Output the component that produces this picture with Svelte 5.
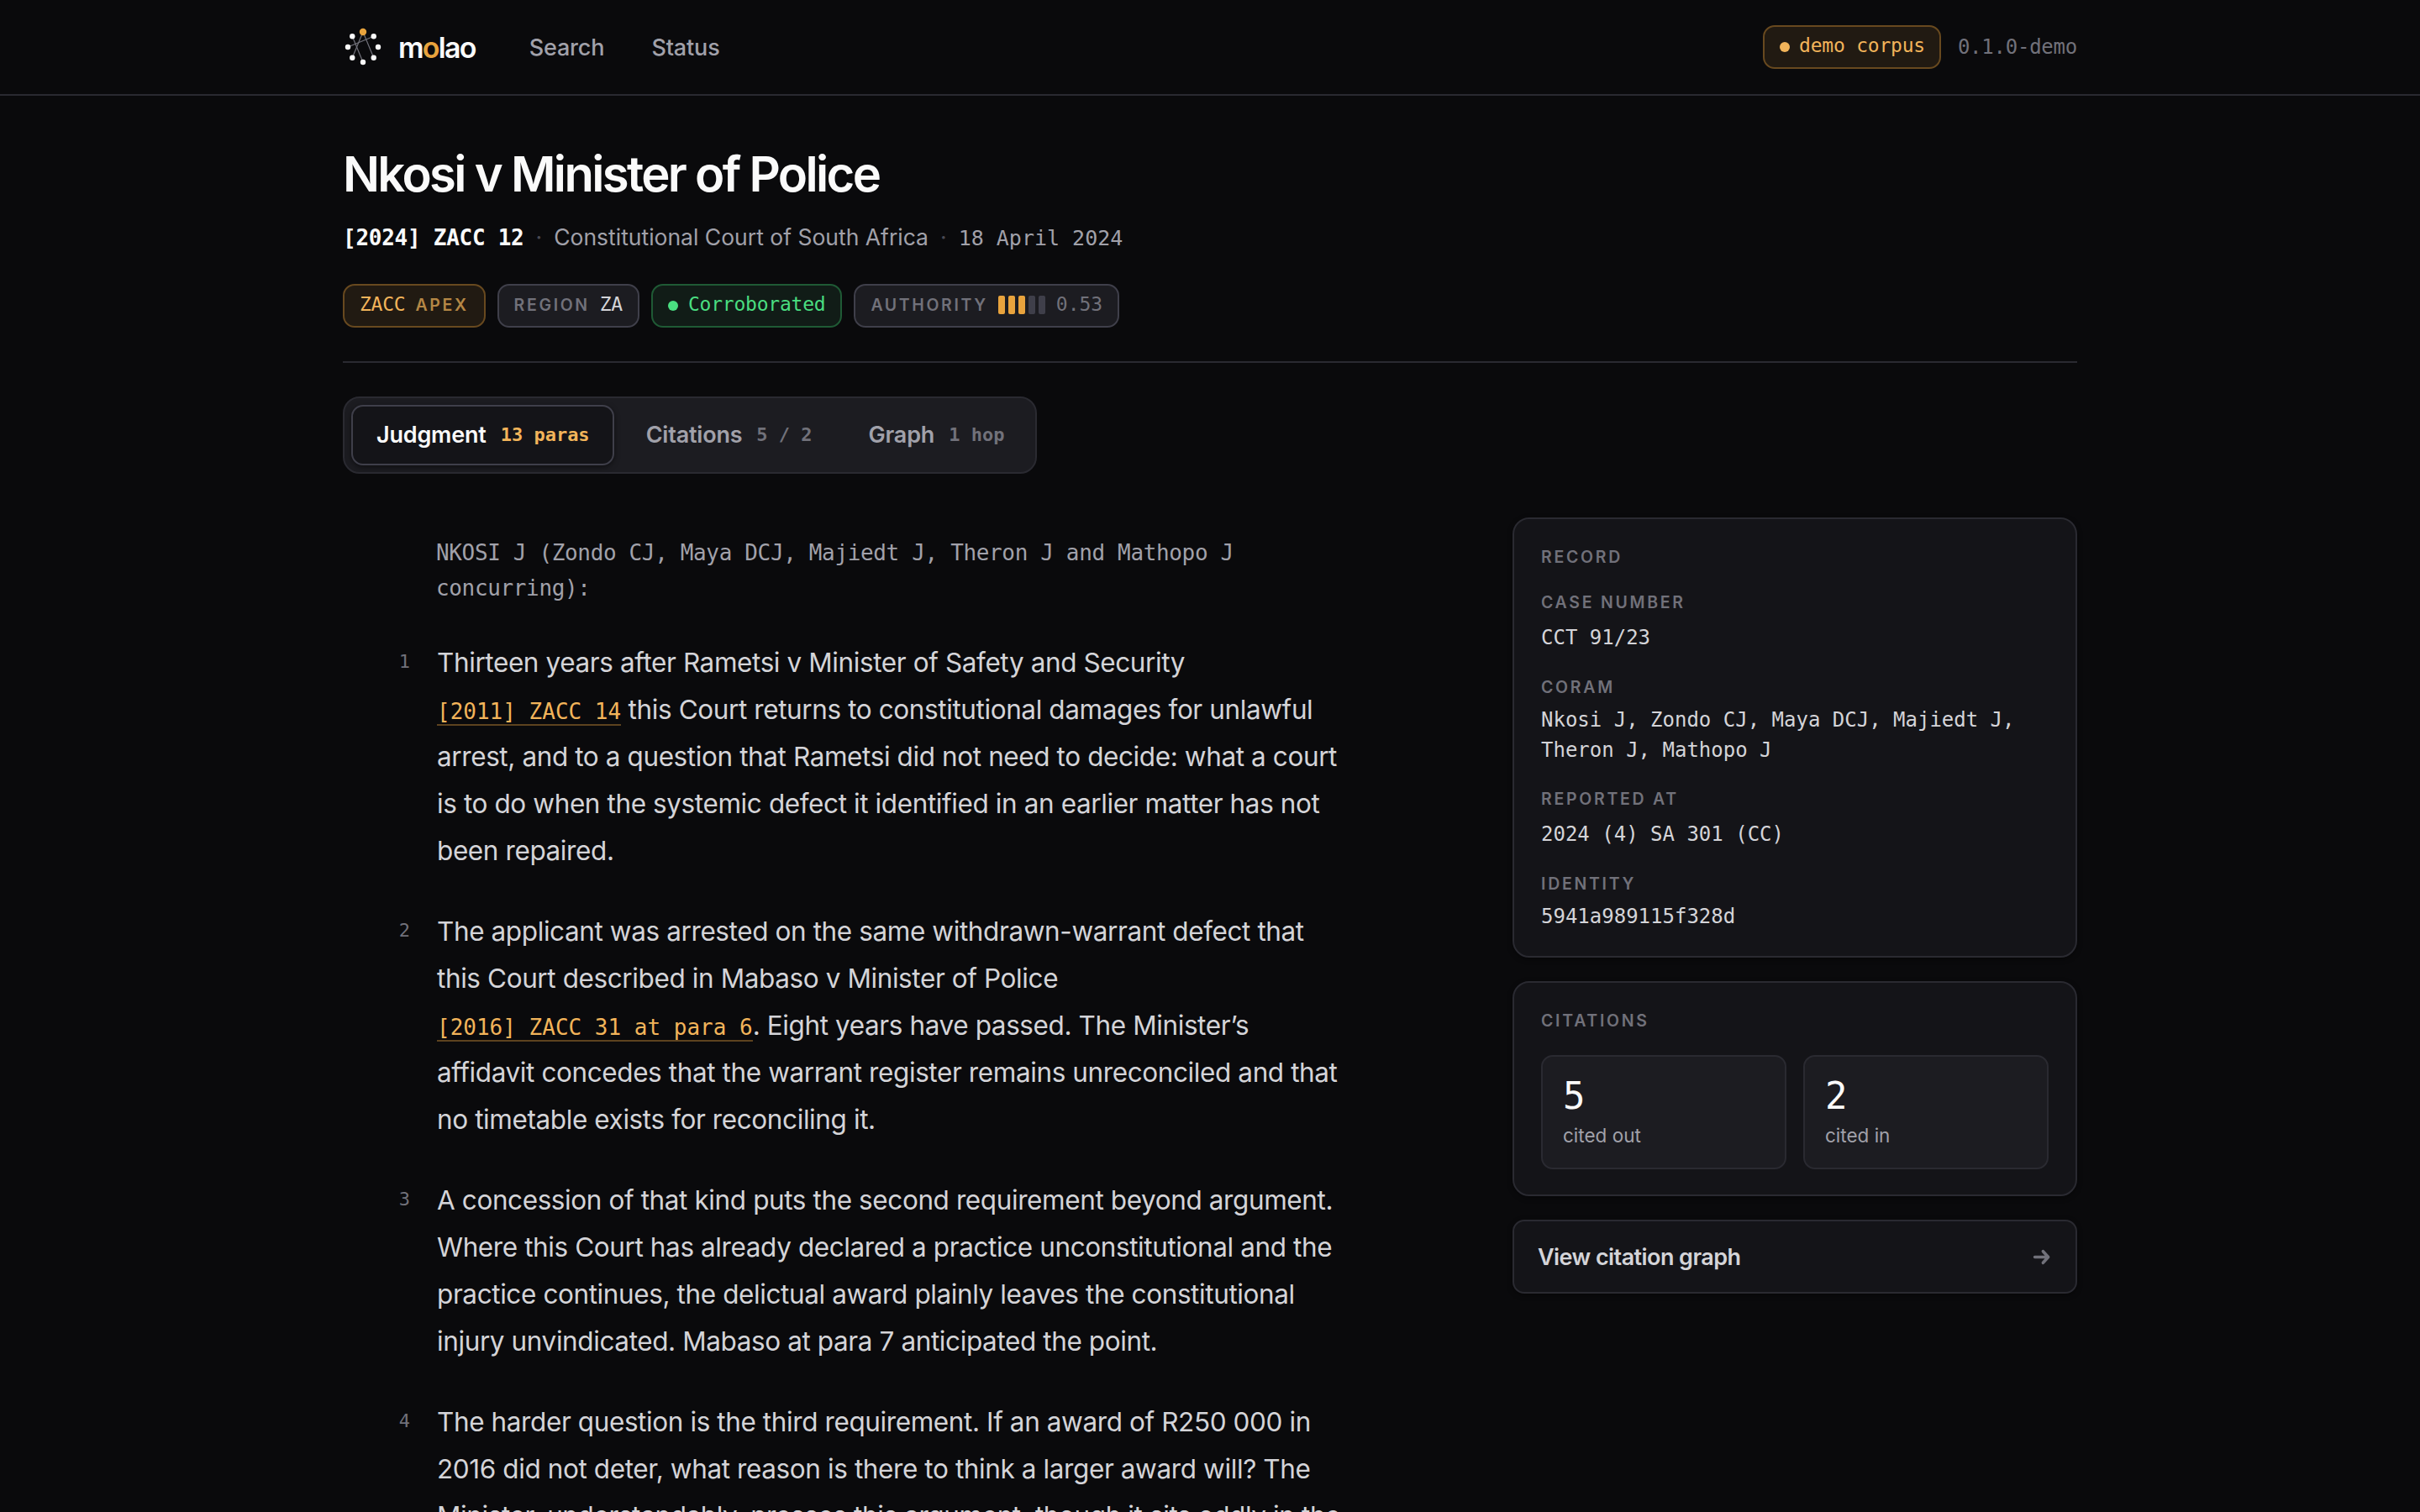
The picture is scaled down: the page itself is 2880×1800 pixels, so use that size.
<script>
	const nodes = [0, 1, 2, 3, 4, 5, 6, 7].map((i) => {
		const angle = (i * Math.PI) / 4 - Math.PI / 2;
		return { x: 12 + 9 * Math.cos(angle), y: 12 + 9 * Math.sin(angle) };
	});

	// pairs of node indexes joined by a line
	const links = [
		[0, 3],
		[0, 5],
		[1, 6],
		[7, 4],
	];

	const authority = 0.53;
	const record = [
		{ label: "Case number", value: "CCT 91/23" },
		{ label: "Coram", value: "Nkosi J, Zondo CJ, Maya DCJ, Majiedt J, Theron J, Mathopo J", long: true },
		{ label: "Reported at", value: "2024 (4) SA 301 (CC)" },
		{ label: "Identity", value: "5941a989115f328d", long: true },
	];

	const paragraphs = [
		[
			"Thirteen years after Rametsi v Minister of Safety and Security ",
			{ cite: "[2011] ZACC 14" },
			" this Court returns to constitutional damages for unlawful arrest, and to a question that Rametsi did not need to decide: what a court is to do when the systemic defect it identified in an earlier matter has not been repaired.",
		],
		[
			"The applicant was arrested on the same withdrawn-warrant defect that this Court described in Mabaso v Minister of Police ",
			{ cite: "[2016] ZACC 31 at para 6" },
			". Eight years have passed. The Minister’s affidavit concedes that the warrant register remains unreconciled and that no timetable exists for reconciling it.",
		],
		[
			"A concession of that kind puts the second requirement beyond argument. Where this Court has already declared a practice unconstitutional and the practice continues, the delictual award plainly leaves the constitutional injury unvindicated. Mabaso at para 7 anticipated the point.",
		],
		[
			"The harder question is the third requirement. If an award of R250 000 in 2016 did not deter, what reason is there to think a larger award will? The Minister, understandably, presses this argument, though it sits oddly in the",
		],
	];

	let tab = "judgment";
	const tabs = [
		{ id: "judgment", name: "Judgment", count: "13 paras" },
		{ id: "citations", name: "Citations", count: "5 / 2" },
		{ id: "graph", name: "Graph", count: "1 hop" },
	];
</script>

<div class="page">
	<header>
		<div class="wrap bar">
			<a class="brand" href="#/">
				<svg viewBox="0 0 24 24" width="48" height="48">
					{#each links as [a, b]}
						<line x1={nodes[a].x} y1={nodes[a].y} x2={nodes[b].x} y2={nodes[b].y} />
					{/each}
					{#each nodes as node, i}
						<circle cx={node.x} cy={node.y} r={i === 0 ? 2.1 : 1.6} class:lead={i === 0} />
					{/each}
				</svg>
				<span class="word">m<b>o</b>lao</span>
			</a>
			<nav>
				<a href="#/search">Search</a>
				<a href="#/status">Status</a>
			</nav>
			<div class="meta">
				<span class="chip amber"><i class="dot"></i>demo corpus</span>
				<span class="version">0.1.0-demo</span>
			</div>
		</div>
	</header>

	<main class="wrap">
		<section class="title">
			<h1>Nkosi v Minister of Police</h1>
			<p class="sub">
				<strong>[2024] ZACC 12</strong>
				<span class="sep">·</span>
				<span>Constitutional Court of South Africa</span>
				<span class="sep">·</span>
				<span class="mono">18 April 2024</span>
			</p>
			<div class="chips">
				<span class="chip amber">ZACC <em>Apex</em></span>
				<span class="chip"><em>Region</em> ZA</span>
				<span class="chip green"><i class="dot"></i>Corroborated</span>
				<span class="chip">
					<em>Authority</em>
					<span class="meter">
						{#each [0, 1, 2, 3, 4] as n}
							<i class:on={n < Math.round(authority * 5)}></i>
						{/each}
					</span>
					<span class="score">{authority}</span>
				</span>
			</div>
		</section>

		<div class="tabs">
			{#each tabs as t}
				<button class:active={tab === t.id} on:click={() => (tab = t.id)}>
					{t.name}<span>{t.count}</span>
				</button>
			{/each}
		</div>

		<div class="columns">
			<article>
				<p class="bench">NKOSI J (Zondo CJ, Maya DCJ, Majiedt J, Theron J and Mathopo J concurring):</p>
				{#each paragraphs as parts, i}
					<div class="para">
						<span class="num">{i + 1}</span>
						<p>
							{#each parts as part}{#if part.cite}<a href="#/cite">{part.cite}</a>{:else}{part}{/if}{/each}
						</p>
					</div>
				{/each}
			</article>

			<aside>
				<div class="card record">
					<h2>Record</h2>
					<dl>
						{#each record as row}
							<dt>{row.label}</dt>
							<dd class:long={row.long}>{row.value}</dd>
						{/each}
					</dl>
				</div>
				<div class="card">
					<h2>Citations</h2>
					<div class="stats">
						<div class="stat"><b>5</b><span>cited out</span></div>
						<div class="stat"><b>2</b><span>cited in</span></div>
					</div>
				</div>
				<a class="graph-link" href="#/graph">
					View citation graph
					<svg viewBox="0 0 24 24" width="24" height="24">
						<path d="M3.6 12.5h15.8M13.4 5.7l6.2 6.8-6.2 6.8" />
					</svg>
				</a>
			</aside>
		</div>
	</main>
</div>

<style>
	:global(body) {
		background: #0a0a0c;
	}

	.page {
		height: 1800px;
		overflow: hidden;
		font-family: Inter, "Liberation Sans", sans-serif;
		font-size: 28px;
		color: #d4d4d8;
		background: #0a0a0c;
		--mono: "DejaVu Sans Mono", monospace;
	}

	.wrap {
		width: 2064px;
		margin: 0 auto;
	}

	a {
		color: inherit;
		text-decoration: none;
	}

	header {
		height: 112px;
		border-bottom: 2px solid #2a2a31;
	}

	.bar {
		display: flex;
		align-items: center;
		height: 112px;
	}

	.brand {
		display: flex;
		align-items: center;
		gap: 18px;
	}

	.brand svg line {
		stroke: #71717a;
		stroke-width: 0.6;
	}

	.brand svg circle {
		fill: #fafafa;
	}

	.brand svg .lead {
		fill: #e8a33d;
	}

	.word {
		font-size: 34px;
		font-weight: 600;
		letter-spacing: -0.052em;
		color: #fafafa;
	}

	.word b {
		font-weight: 600;
		color: #e8a33d;
	}

	nav {
		display: flex;
		gap: 56px;
		margin-left: 64px;
		font-size: 27px;
		font-weight: 500;
		letter-spacing: -0.15px;
		color: #a1a1aa;
	}

	.meta {
		display: flex;
		align-items: center;
		gap: 20px;
		margin-left: auto;
	}

	.meta .chip {
		gap: 11px;
		padding-right: 17px;
	}

	.version {
		font-family: var(--mono);
		font-size: 24px;
		letter-spacing: -0.01em;
		color: #71717a;
	}

	.chip {
		display: inline-flex;
		align-items: center;
		gap: 12px;
		box-sizing: border-box;
		height: 52px;
		padding: 0 18px 4px;
		border: 2px solid #3f3f4a;
		border-radius: 14px;
		background: #1c1c21;
		font-family: var(--mono);
		font-size: 23px;
		letter-spacing: -0.01em;
		color: #d4d4d8;
	}

	.chip em {
		margin-top: 2px;
		font-family: Inter, sans-serif;
		font-size: 19.5px;
		font-style: normal;
		font-weight: 600;
		letter-spacing: 0.135em;
		text-transform: uppercase;
		color: #71717a;
	}

	.chip.amber {
		border-color: #68491f;
		background: #211a12;
		color: #f2b45a;
	}

	.chip.amber em {
		color: #b58745;
	}

	.chip.green {
		border-color: #1f5a35;
		background: #111c17;
		color: #4ade80;
	}

	.dot {
		width: 12px;
		height: 12px;
		margin-top: 4px;
		border-radius: 50%;
		background: currentColor;
	}

	.title {
		padding: 58px 0 40px;
		border-bottom: 2px solid #2a2a31;
	}

	h1 {
		margin: 0;
		font-size: 58px;
		font-weight: 600;
		line-height: 70px;
		letter-spacing: -0.046em;
		color: #fafafa;
	}

	.sub {
		display: flex;
		align-items: baseline;
		gap: 14px;
		margin: 19px 0 33px;
		font-size: 26.5px;
		line-height: 42px;
		color: #a1a1aa;
	}

	.sub strong {
		font-family: var(--mono);
		font-size: 26px;
		letter-spacing: -0.01em;
		color: #fafafa;
	}

	.sub .mono {
		font-family: var(--mono);
		font-size: 25px;
	}

	.sep {
		color: #4a4a54;
	}

	.chips {
		display: flex;
		gap: 14px;
	}

	.meter {
		display: flex;
		gap: 4px;
		margin-top: 2px;
	}

	.meter i {
		width: 8px;
		height: 22px;
		border-radius: 2px;
		background: #3f3f4a;
	}

	.meter .on {
		background: #e8a33d;
	}

	.score {
		margin-left: 1px;
		letter-spacing: 0;
		color: #71717a;
	}

	.tabs {
		display: flex;
		gap: 8px;
		box-sizing: border-box;
		width: fit-content;
		height: 92px;
		margin: 40px 0 52px;
		padding: 8px;
		border: 2px solid #2a2a31;
		border-radius: 20px;
		background: #1c1c21;
	}

	.tabs button {
		display: flex;
		align-items: center;
		gap: 17px;
		padding: 0 27px 2px 28px;
		border: 2px solid transparent;
		border-radius: 14px;
		background: none;
		font-family: inherit;
		font-size: 27px;
		font-weight: 600;
		letter-spacing: -0.2px;
		color: #a1a1aa;
	}

	.tabs span {
		font-family: var(--mono);
		font-size: 22px;
		letter-spacing: 0;
		color: #71717a;
	}

	.tabs .active {
		border-color: #3f3f4a;
		background: #141418;
		box-shadow: 0 2px 6px rgb(0 0 0 / 0.5);
		color: #fafafa;
	}

	.tabs .active span {
		color: #f2b45a;
	}

	.columns {
		display: grid;
		grid-template-columns: 1192px 672px;
		justify-content: space-between;
		align-items: start;
	}

	.bench {
		width: 1080px;
		margin: 21px 0 40px 111px;
		font-family: var(--mono);
		font-size: 26px;
		line-height: 42px;
		letter-spacing: -0.35px;
		color: #a1a1aa;
	}

	.para {
		display: grid;
		grid-template-columns: 80px 1080px;
		column-gap: 32px;
		margin-bottom: 40px;
	}

	.para p {
		margin: 0;
		font-size: 31.5px;
		line-height: 56px;
		letter-spacing: -0.4px;
	}

	.para a {
		border-bottom: 2px solid #5d431f;
		font-family: var(--mono);
		font-size: 26px;
		line-height: 0;
		letter-spacing: 0;
		color: #f2b45a;
		white-space: nowrap;
	}

	.num {
		font-family: var(--mono);
		font-size: 22px;
		line-height: 54px;
		text-align: right;
		color: #71717a;
	}

	aside {
		display: grid;
		gap: 28px;
	}

	.card,
	.graph-link {
		border: 2px solid #2a2a31;
		background: #141418;
		box-shadow: 0 2px 6px rgb(0 0 0 / 0.4);
	}

	.card {
		padding: 31px 32px 30px;
		border-radius: 20px;
	}

	.record {
		padding-bottom: 29px;
	}

	h2,
	dt {
		margin: 0;
		font-size: 19.5px;
		font-weight: 600;
		line-height: 28px;
		letter-spacing: 0.14em;
		text-transform: uppercase;
		color: #71717a;
	}

	dl {
		margin: 26px 0 0;
	}

	dd {
		margin: 8px 0 25px;
		font-family: var(--mono);
		font-size: 24px;
		line-height: 40px;
	}

	dd.long {
		margin: 7px 0 26px;
		line-height: 36px;
	}

	dd:last-child,
	dd.long:last-child {
		margin-bottom: 0;
	}

	.stats {
		display: grid;
		grid-template-columns: 1fr 1fr;
		gap: 20px;
		margin-top: 27px;
	}

	.stat {
		box-sizing: border-box;
		height: 136px;
		padding: 21px 24px;
		border: 2px solid #2a2a31;
		border-radius: 14px;
		background: #1c1c21;
	}

	.stat b,
	.stat span {
		display: block;
	}

	.stat b {
		font-family: var(--mono);
		font-size: 44px;
		font-weight: 400;
		line-height: 52px;
		color: #fafafa;
	}

	.stat span {
		font-size: 22.5px;
		line-height: 42px;
		color: #a1a1aa;
	}

	.graph-link {
		display: flex;
		align-items: center;
		justify-content: space-between;
		box-sizing: border-box;
		height: 88px;
		padding: 0 28px;
		border-radius: 14px;
		font-size: 27px;
		font-weight: 600;
		letter-spacing: -0.57px;
	}

	.graph-link svg {
		fill: none;
		stroke: #71717a;
		stroke-width: 3.6;
		stroke-linecap: round;
		stroke-linejoin: round;
	}
</style>
